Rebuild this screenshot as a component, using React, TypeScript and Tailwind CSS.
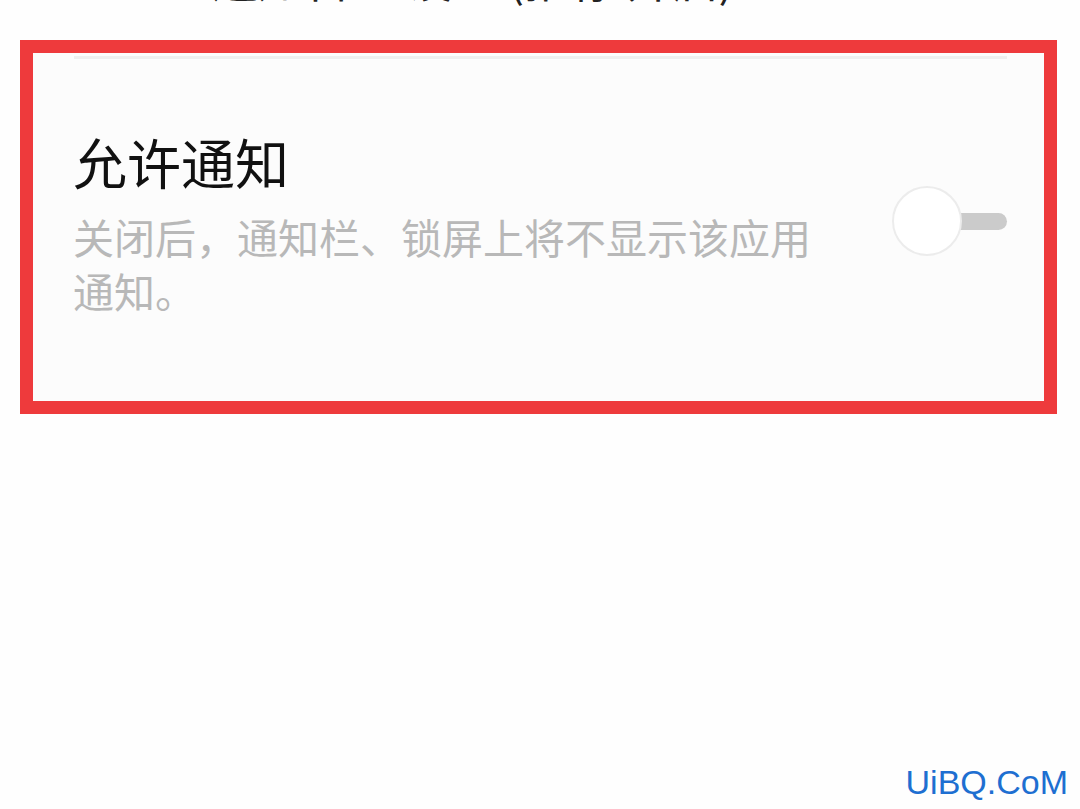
import React from 'react';

const cjk = { fontFamily: '"Noto Sans CJK SC", "Noto Sans", sans-serif' };

// Off state switch: knob on the left, grey track peeking out on the right
const Toggle: React.FC = () => (
  <div className="relative w-[115px] h-[70px] shrink-0 mb-[6px]">
    <div className="absolute right-0 top-[27px] h-[17px] w-[80px] rounded-full bg-[#cbcbcb]" />
    <div className="absolute left-0 top-0 h-[70px] w-[70px] rounded-full bg-white border-2 border-[#ececec]" />
  </div>
);

const App: React.FC = () => {
  return (
    <div className="relative h-[809px] w-full overflow-hidden bg-[#fefefe]" style={cjk}>
      {/* previous row, scrolled out of view */}
      <div className="flex h-[7px] items-end overflow-hidden pl-[212px]">
        <div className="shrink-0 text-[46px] leading-[60px] text-[#222]">通知管理 设置 (推荐 开启)</div>
      </div>

      <div className="ml-[20px] mr-[23px] mt-[33px] border-[13px] border-[#ee3a3c] bg-[#fcfcfc]">
        <div className="ml-[41px] mr-[37px] mt-[3px] h-[3px] bg-[#efefef]" />
        <div className="flex items-center justify-between pl-[40px] pr-[37px] pt-[71px] pb-[84px]">
          <div className="w-[760px]">
            <div className="text-[54px] leading-[64px] text-[#111]">允许通知</div>
            <div className="mt-[15px] text-[41px] leading-[54px] text-[#b8b8b8]">
              关闭后，通知栏、锁屏上将不显示该应用通知。
            </div>
          </div>
          <Toggle />
        </div>
      </div>

      {/* watermark */}
      <div
        className="absolute right-[12px] bottom-[10px] text-[34px] leading-none text-[#1e6fd1]"
        style={{ fontFamily: '"Liberation Sans", Arial, sans-serif' }}
      >
        UiBQ.CoM
      </div>
    </div>
  );
};

export default App;
